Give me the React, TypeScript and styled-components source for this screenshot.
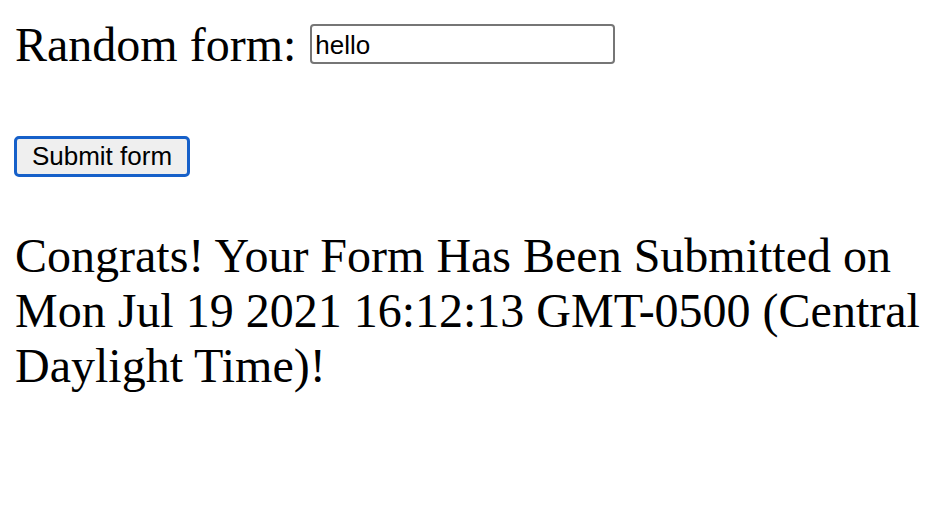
import React from "react";
import styled, { createGlobalStyle } from "styled-components";

const Global = createGlobalStyle`
  html, body { margin: 0; padding: 0; background: #ffffff; }
  body { font-family: "Liberation Serif", "Times New Roman", serif; color: #000; }
`;

const Page = styled.div`
  display: flex;
  flex-direction: column;
  align-items: flex-start;
  padding: 12px 0 0 15px;
`;

const FieldRow = styled.div`
  display: flex;
  align-items: center;
  gap: 14px;
  height: 64px;
`;

const Label = styled.label`
  font-family: "Liberation Serif", "Times New Roman", serif;
  font-size: 48px;
  line-height: 55px;
`;

const TextInput = styled.input`
  box-sizing: border-box;
  width: 305px;
  height: 40px;
  border: 2px solid #767676;
  border-radius: 4px;
  padding: 2px 3px 0;
  font-family: "Liberation Sans", Arial, sans-serif;
  font-size: 26px;
  color: #000;
  background: #fff;
  outline: none;
`;

const SubmitButton = styled.button`
  box-sizing: border-box;
  margin: 60px 0 0 -1px;
  width: 176px;
  height: 41px;
  border: 3px solid #1660c9;
  border-radius: 5px;
  background: #efefef;
  font-family: "Liberation Sans", Arial, sans-serif;
  font-size: 26px;
  line-height: 30px;
  color: #000;
  padding: 0 0 1px;
  cursor: pointer;
`;

const Message = styled.p`
  margin: 51px 0 0;
  width: 910px;
  font-family: "Liberation Serif", "Times New Roman", serif;
  font-size: 48px;
  line-height: 55px;
`;

export default function App() {
  return (
    <>
      <Global />
      <Page>
        <FieldRow>
          <Label htmlFor="random">Random form:</Label>
          <TextInput id="random" defaultValue="hello" />
        </FieldRow>
        <SubmitButton type="button">Submit form</SubmitButton>
        <Message>
          Congrats! Your Form Has Been Submitted on Mon Jul 19 2021 16:12:13 GMT-0500 (Central Daylight Time)!
        </Message>
      </Page>
    </>
  );
}
